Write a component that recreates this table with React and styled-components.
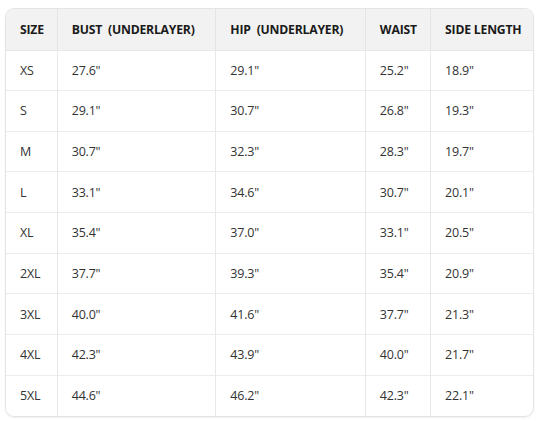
import React from 'react';
import styled, { createGlobalStyle } from 'styled-components';

const GlobalStyle = createGlobalStyle`
    html, body {
        margin: 0;
        padding: 0;
        background: #fff;
    }
    body {
        font-family: "Open Sans", "Noto Sans", sans-serif;
    }
`;

const Page = styled.div`
    width: 540px;
    height: 421px;
    padding: 8px 8px 0 5px;
    box-sizing: border-box;
`;

const Card = styled.div`
    width: 527px;
    border: 1px solid #e4e4e4;
    border-radius: 9px;
    overflow: hidden;
    box-shadow: 0 1px 2px rgba(0, 0, 0, 0.06);
`;

const Table = styled.table`
    width: 100%;
    border-collapse: collapse;
    table-layout: fixed;
    font-size: 12.5px;
    color: #333;
`;

const HeadCell = styled.th`
    box-sizing: border-box;
    height: 41px;
    padding: 0 0 0 14px;
    text-align: left;
    font-size: 12.2px;
    font-weight: 700;
    color: #1a1a1a;
    background: #f2f2f2;
    border-left: ${p => (p.first ? 'none' : '1px solid #e4e4e4')};
    border-bottom: 1px solid #e8e8e8;
    white-space: pre;
    width: ${p => p.w}px;
    letter-spacing: -0.2px;
`;

const Cell = styled.td`
    box-sizing: border-box;
    height: 40.67px;
    padding: 0 0 0 14px;
    border-left: ${p => (p.first ? 'none' : '1px solid #e8e8e8')};
    border-top: 1px solid #ececec;
    letter-spacing: -0.2px;
`;

const columns = [
    { label: 'SIZE', w: 51 },
    { label: 'BUST  (UNDERLAYER)', w: 158 },
    { label: 'HIP  (UNDERLAYER)', w: 149 },
    { label: 'WAIST', w: 65 },
    { label: 'SIDE LENGTH', w: 102 },
];

const rows = [
    ['XS', '27.6"', '29.1"', '25.2"', '18.9"'],
    ['S', '29.1"', '30.7"', '26.8"', '19.3"'],
    ['M', '30.7"', '32.3"', '28.3"', '19.7"'],
    ['L', '33.1"', '34.6"', '30.7"', '20.1"'],
    ['XL', '35.4"', '37.0"', '33.1"', '20.5"'],
    ['2XL', '37.7"', '39.3"', '35.4"', '20.9"'],
    ['3XL', '40.0"', '41.6"', '37.7"', '21.3"'],
    ['4XL', '42.3"', '43.9"', '40.0"', '21.7"'],
    ['5XL', '44.6"', '46.2"', '42.3"', '22.1"'],
];

const App = () => {
    return (
        <Page>
            <GlobalStyle />
            <Card>
                <Table>
                    <thead>
                        <tr>
                            {columns.map((c, i) => (
                                <HeadCell key={c.label} w={c.w} first={i === 0}>
                                    {c.label}
                                </HeadCell>
                            ))}
                        </tr>
                    </thead>
                    <tbody>
                        {rows.map(r => (
                            <tr key={r[0]}>
                                {r.map((v, i) => (
                                    <Cell key={i} first={i === 0}>{v}</Cell>
                                ))}
                            </tr>
                        ))}
                    </tbody>
                </Table>
            </Card>
        </Page>
    );
};

export default App;
